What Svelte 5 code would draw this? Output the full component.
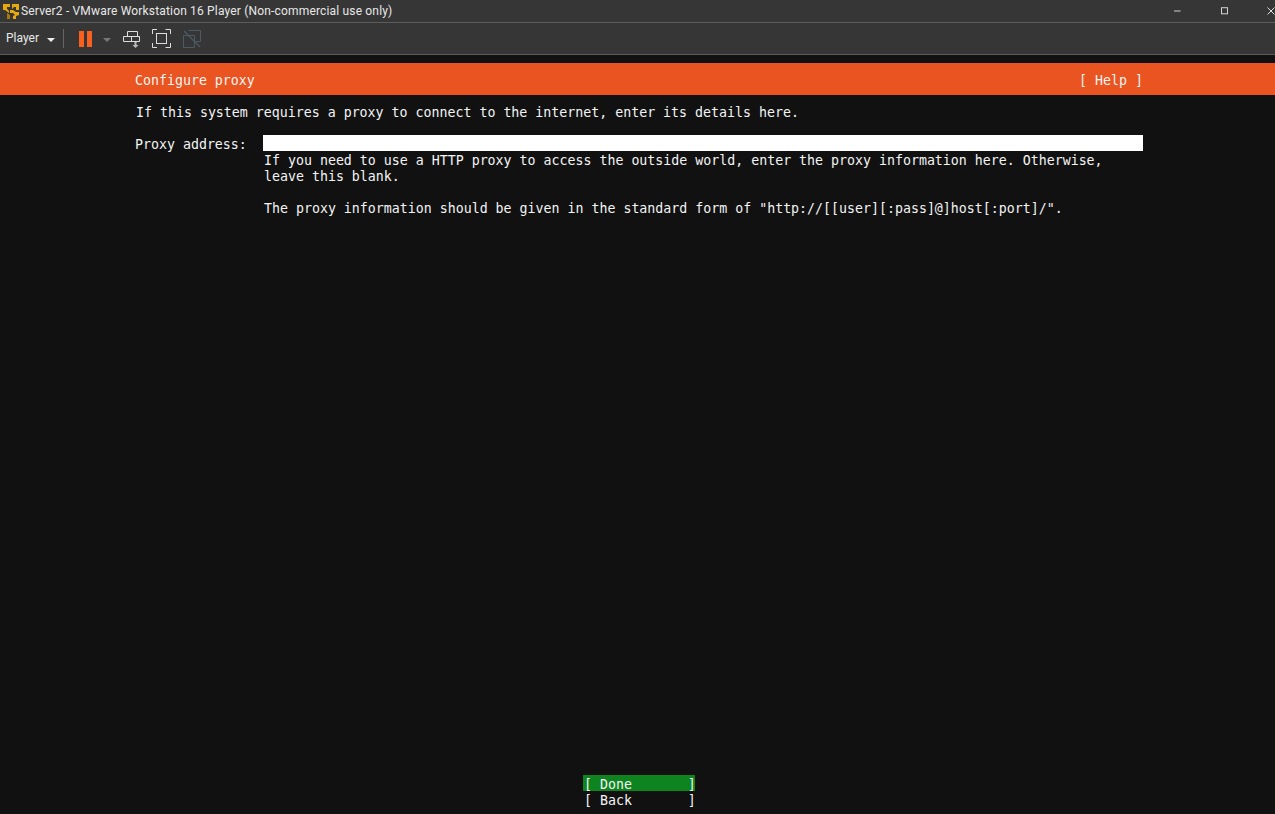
<script>
  const title = 'Server2 - VMware Workstation 16 Player (Non-commercial use only)';
</script>

<div class="window">
  <header class="titlebar">
    <svg class="logo" width="18" height="18" viewBox="0 0 18 18">
      <path d="M1 2h7v3H5v2l2 2v2L3 8H1z" fill="#e8a90e" />
      <path d="M10 2h7v6h-3V5h-2l-2 2z" fill="#e8a90e" />
      <path d="M8 8h3l3 2h3v3l-3 1v3h-3v-3l2-1-2-2H8z" fill="#e8a90e" />
      <path d="M5 11l3 2v4H5z" fill="#a87a08" />
    </svg>
    <span class="title">{title}</span>
    <div class="controls">
      <svg class="min" width="8" height="2" viewBox="0 0 8 2"><path d="M0 1h7" stroke="#ddd" stroke-width="1" /></svg>
      <svg class="max" width="8" height="8" viewBox="0 0 8 8"><rect x="0.5" y="0.5" width="6.5" height="6.5" fill="none" stroke="#ddd" /></svg>
      <svg class="close" width="8" height="8" viewBox="0 0 8 8"><path d="M0.5 0.5l7 7M7.5 0.5l-7 7" fill="none" stroke="#ddd" /></svg>
    </div>
  </header>

  <div class="toolbar">
    <span class="player">Player</span>
    <span class="caret white"></span>
    <span class="sep"></span>
    <span class="pause"><i></i><i></i></span>
    <span class="caret gray"></span>
    <svg class="ic send" width="18" height="20" viewBox="0 0 18 20" fill="none" stroke="#ddd">
      <path d="M4.5 1.5h10v5h-10zM0.5 6.5h16v5h-16zM8.5 6.5v5" />
      <path d="M12.5 12v3" stroke="#bbb" stroke-width="2" />
      <path d="M9.5 15h6l-3 3z" fill="#bbb" stroke="none" />
    </svg>
    <svg class="ic full" width="19" height="19" viewBox="0 0 19 19" fill="none" stroke="#ddd">
      <path d="M0.5 5V0.5H5M13.5 0.5H18.5V5M18.5 14V18.500H13.5M5 18.500H0.500V14" />
      <rect x="4.500" y="4.500" width="10" height="10" />
    </svg>
    <svg class="ic unity" width="18" height="18" viewBox="0 0 18 18" fill="none" stroke="#4b5a63">
      <path d="M5.500 0.500h12v11h-5M0.500 5.500h11v12h-11z" />
      <path d="M1 1l16 16" stroke="#4b5a63" stroke-width="1.200" />
    </svg>
  </div>

  <main class="screen">
    <div class="band">
      <span>Configure proxy</span>
      <span>[ Help ]</span>
    </div>

    <p class="intro">If this system requires a proxy to connect to the internet, enter its details here.</p>

    <div class="form">
      <span class="label">Proxy address:</span>
      <div class="field">
        <div class="input"></div>
        <p class="hint">If you need to use a HTTP proxy to access the outside world, enter the proxy information here. Otherwise,<br />leave this blank.</p>
        <p class="hint gap">The proxy information should be given in the standard form of "http://[[user][:pass]@]host[:port]/".</p>
      </div>
    </div>

    <div class="buttons">
      <div class="btn done">[ Done       ]</div>
      <div class="btn">[ Back       ]</div>
    </div>
  </main>
</div>

<style>
  :global(body) {
    margin: 0;
    background: #111;
  }

  .window {
    width: 1275px;
    height: 814px;
    display: flex;
    flex-direction: column;
    overflow: hidden;
    font-family: Roboto, "Noto Sans", sans-serif;
  }

  .titlebar {
    height: 22px;
    flex: none;
    display: flex;
    align-items: center;
    background: #363636;
    border-bottom: 1px solid #5c5c5c;
    color: #e8e8e8;
    font-size: 12px;
  }

  .logo {
    margin-left: 2px;
    margin-right: 1px;
    flex: none;
  }

  .title {
    white-space: nowrap;
    letter-spacing: 0.17px;
  }

  .controls {
    margin-left: auto;
    display: flex;
    align-items: center;
    flex: none;
    width: 101px;
    height: 100%;
  }

  .max { margin-left: 39px; }
  .close { margin-left: 39px; flex: none; }

  .toolbar {
    height: 31px;
    flex: none;
    display: flex;
    align-items: center;
    background: #363636;
    border-bottom: 1px solid #5c5c5c;
    color: #e8e8e8;
    font-size: 12px;
    padding-left: 6px;
  }

  .player {
    width: 41px;
    margin-top: -2px;
  }

  .caret {
    width: 0;
    height: 0;
    border-left: 4px solid transparent;
    border-right: 4px solid transparent;
    border-top: 4px solid #eee;
    margin-top: 2px;
  }

  .caret.gray {
    border-top-color: #777;
    margin-left: 11px;
  }

  .sep {
    width: 1px;
    height: 19px;
    background: #666;
    margin-left: 8px;
  }

  .pause {
    display: flex;
    gap: 3px;
    margin-left: 15px;
  }

  .pause i {
    display: block;
    width: 5px;
    height: 16px;
    background: #f9601e;
  }

  .ic {
    flex: none;
  }

  .send { margin-left: 12px; margin-top: 2px; }
  .full { margin-left: 11px; margin-top: -1px; }
  .unity { margin-left: 12px; }

  .screen {
    flex: 1;
    display: flex;
    flex-direction: column;
    background: #111;
    color: #f4f4f4;
    font-family: "DejaVu Sans Mono", monospace;
    font-size: 13.28px;
    line-height: 16px;
    padding-top: 8px;
    padding-bottom: 7px;
    box-sizing: border-box;
  }

  p {
    margin: 0;
    white-space: pre;
  }

  .band {
    height: 28px;
    padding: 4px 132px 0 135px;
    display: flex;
    justify-content: space-between;
    align-items: center;
    background: #e95420;
  }

  .intro {
    margin: 10px 0 14px 136px;
  }

  .form {
    display: flex;
    margin-left: 135px;
  }

  .label {
    width: 128px;
    flex: none;
    padding-top: 2px;
  }

  .field {
    width: 880px;
  }

  .input {
    height: 16px;
    background: #fff;
  }

  .hint {
    margin-top: 2px;
    margin-left: 1px;
  }

  .gap {
    margin-top: 16px;
  }

  .buttons {
    margin-top: auto;
    align-self: center;
    margin-left: 3px;
  }

  .btn {
    width: 111px;
    height: 14px;
    padding: 2px 0 0 1px;
    white-space: pre;
  }

  .done {
    background: #0e8420;
  }
</style>
